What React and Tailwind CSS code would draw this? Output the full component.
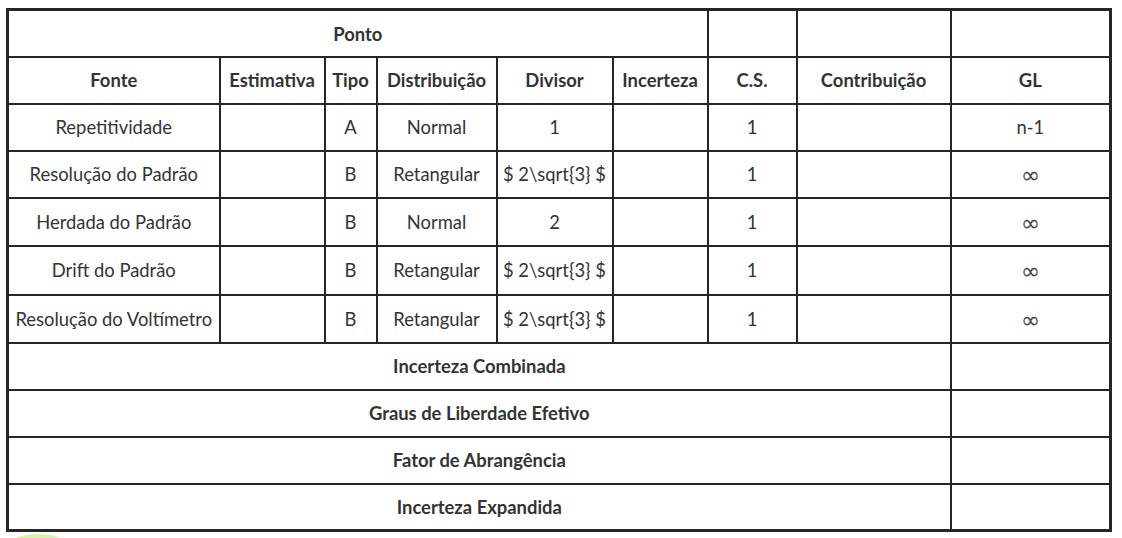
import React from 'react';

const rows = [
    { fonte: 'Repetitividade', tipo: 'A', dist: 'Normal', divisor: '1', cs: '1', gl: 'n-1', h: 'h-[47px]' },
    { fonte: 'Resolução do Padrão', tipo: 'B', dist: 'Retangular', divisor: '$ 2\\sqrt{3} $', cs: '1', gl: '∞', h: 'h-[47px]' },
    { fonte: 'Herdada do Padrão', tipo: 'B', dist: 'Normal', divisor: '2', cs: '1', gl: '∞', h: 'h-[48px]' },
    { fonte: 'Drift do Padrão', tipo: 'B', dist: 'Retangular', divisor: '$ 2\\sqrt{3} $', cs: '1', gl: '∞', h: 'h-[49px]' },
    { fonte: 'Resolução do Voltímetro', tipo: 'B', dist: 'Retangular', divisor: '$ 2\\sqrt{3} $', cs: '1', gl: '∞', h: 'h-[48px]' },
];

const footer = ['Incerteza Combinada', 'Graus de Liberdade Efetivo', 'Fator de Abrangência', 'Incerteza Expandida'];

const cell = 'border-2 border-[#262626] text-center align-middle px-1 pt-[2px] h-[47px] leading-[1.4]';
const head = `${cell} font-bold`;

export default function App() {
    return (
        <div className="min-h-screen bg-white font-['Lato',sans-serif] text-[18.4px] text-[#333]">
            <div className="pt-2 pl-1.5">
                <table className="table-fixed border-collapse border-[3px] border-[#262626] w-[1105px]">
                    <colgroup>
                        <col className="w-[212px]" />
                        <col className="w-[105px]" />
                        <col className="w-[52px]" />
                        <col className="w-[120px]" />
                        <col className="w-[116px]" />
                        <col className="w-[95px]" />
                        <col className="w-[89px]" />
                        <col className="w-[154px]" />
                        <col className="w-[160px]" />
                    </colgroup>
                    <thead>
                        <tr>
                            <th colSpan={6} className={`${head} pt-[4px]`}>Ponto</th>
                            <th className={head}></th>
                            <th className={head}></th>
                            <th className={head}></th>
                        </tr>
                        <tr>
                            <th className={head}>Fonte</th>
                            <th className={head}>Estimativa</th>
                            <th className={head}>Tipo</th>
                            <th className={head}>Distribuição</th>
                            <th className={head}>Divisor</th>
                            <th className={head}>Incerteza</th>
                            <th className={head}>C.S.</th>
                            <th className={head}>Contribuição</th>
                            <th className={head}>GL</th>
                        </tr>
                    </thead>
                    <tbody>
                        {rows.map((r) => (
                            <tr key={r.fonte} className={r.h}>
                                <td className={`${cell} whitespace-nowrap`}>{r.fonte}</td>
                                <td className={cell}></td>
                                <td className={cell}>{r.tipo}</td>
                                <td className={cell}>{r.dist}</td>
                                <td className={`${cell} whitespace-nowrap`}>{r.divisor}</td>
                                <td className={cell}></td>
                                <td className={cell}>{r.cs}</td>
                                <td className={cell}></td>
                                <td className={cell}>
                                    {r.gl === '∞'
                                        ? <span className="font-['DejaVu_Sans',sans-serif] text-[23px] leading-none text-[#444] relative top-[2px]">∞</span>
                                        : r.gl}
                                </td>
                            </tr>
                        ))}
                        {footer.map((f) => (
                            <tr key={f}>
                                <td colSpan={8} className={head}>{f}</td>
                                <td className={cell}></td>
                            </tr>
                        ))}
                    </tbody>
                </table>
            </div>
            <div className="ml-[10px] mt-[2px] w-[56px] h-[20px] rounded-[50%] bg-[#d6f4a6]" />
        </div>
    );
}
